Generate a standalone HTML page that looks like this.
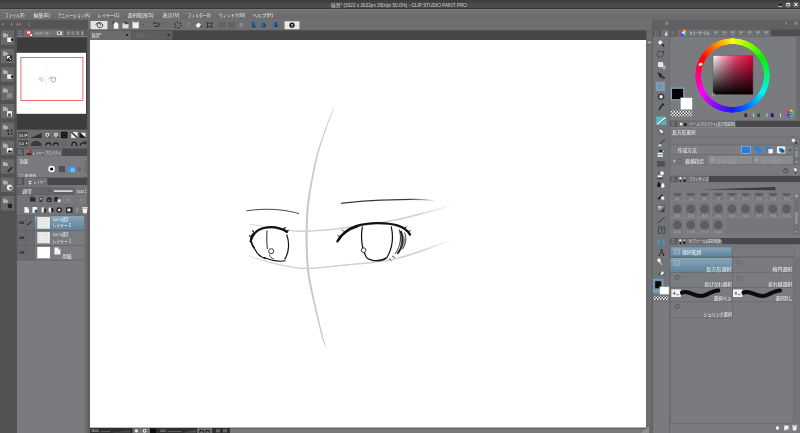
<!DOCTYPE html>
<html lang="ja">
<head>
<meta charset="utf-8">
<title>CLIP STUDIO PAINT PRO</title>
<style>
html,body{margin:0;padding:0;}
body{width:800px;height:433px;overflow:hidden;background:#555557;position:relative;}
svg{position:absolute;left:0;top:0;will-change:transform;}
svg text{font-family:"Liberation Sans","Noto Sans CJK JP",sans-serif;}
#wheel{position:absolute;left:695.4px;top:38px;width:74.8px;height:74.8px;border-radius:50%;
 background:conic-gradient(from 0deg,hsl(60,100%,50%),hsl(90,100%,50%),hsl(120,100%,48%),hsl(150,100%,48%),hsl(180,100%,48%),hsl(210,100%,50%),hsl(240,100%,55%),hsl(270,100%,52%),hsl(300,100%,50%),hsl(330,100%,50%),hsl(360,100%,50%),hsl(390,100%,50%),hsl(420,100%,50%));
 -webkit-mask:radial-gradient(circle closest-side,transparent 0,transparent 83%,#000 84.5%,#000 98.5%,transparent 100%);
 mask:radial-gradient(circle closest-side,transparent 0,transparent 83%,#000 84.5%,#000 98.5%,transparent 100%);}
</style>
</head>
<body>
<svg id="ui" width="800" height="433" viewBox="0 0 800 433">
<defs><linearGradient id="gt" x1="0" y1="0" x2="0" y2="1"><stop offset="0" stop-color="#3a3a3a"/><stop offset="0.6" stop-color="#4d4d4d"/><stop offset="1" stop-color="#454545"/></linearGradient><linearGradient id="gm" x1="0" y1="0" x2="0" y2="1"><stop offset="0" stop-color="#747476"/><stop offset="1" stop-color="#69696b"/></linearGradient><linearGradient id="gsel" x1="0" y1="0" x2="0" y2="1"><stop offset="0" stop-color="#86a6ba"/><stop offset="1" stop-color="#5f8399"/></linearGradient><linearGradient id="gsq" x1="0" y1="0" x2="1" y2="0"><stop offset="0" stop-color="#fff"/><stop offset="0.25" stop-color="#f4a4b8"/><stop offset="0.55" stop-color="#ea4470"/><stop offset="1" stop-color="#e2003a"/></linearGradient><linearGradient id="gsq2" x1="0" y1="0" x2="0" y2="1"><stop offset="0" stop-color="#000" stop-opacity="0"/><stop offset="1" stop-color="#000"/></linearGradient><linearGradient id="ggr" x1="0" y1="0" x2="1" y2="1"><stop offset="0" stop-color="#fff"/><stop offset="1" stop-color="#111"/></linearGradient><pattern id="chk" width="3.3" height="3.3" patternTransform="scale(0.825)" patternUnits="userSpaceOnUse"><rect width="4" height="4" fill="#fff"/><rect width="2" height="2" fill="#d4d4d4"/><rect x="2" y="2" width="2" height="2" fill="#d4d4d4"/></pattern><pattern id="chk2" width="3" height="3" patternUnits="userSpaceOnUse"><rect width="3" height="3" fill="#fff"/><rect width="1.5" height="1.5" fill="#444"/><rect x="1.5" y="1.5" width="1.5" height="1.5" fill="#444"/></pattern><linearGradient id="fg" gradientUnits="userSpaceOnUse" x1="418" y1="0" x2="453" y2="0"><stop offset="0" stop-color="#cfcfcf"/><stop offset="1" stop-color="#cfcfcf" stop-opacity="0"/></linearGradient><linearGradient id="fb" gradientUnits="userSpaceOnUse" x1="408" y1="0" x2="436" y2="0"><stop offset="0" stop-color="#3a3a3a"/><stop offset="1" stop-color="#3a3a3a" stop-opacity="0"/></linearGradient></defs>
<rect x="0" y="0" width="800" height="9" fill="url(#gt)" />
<rect x="0" y="8.5" width="800" height="0.8" fill="#2a2a2a" />
<text x="331" y="6.8" font-size="4.6" fill="#c8c8c8" text-anchor="start"  textLength="136" lengthAdjust="spacingAndGlyphs">練習* (3022 x 2622px 350dpi 50.0%) - CLIP STUDIO PAINT PRO</text>
<circle cx="780.3" cy="4.7" r="2.7" fill="#2a2a2a" stroke="#777" stroke-width="0.6"/>
<rect x="778.6" y="5.9" width="3.4" height="0.9" fill="#d0d0d0" />
<circle cx="788.1" cy="4.7" r="2.7" fill="#2a2a2a" stroke="#888" stroke-width="0.6"/>
<rect x="786.4" y="3" width="3.4" height="3.4" fill="#f0f0f0" />
<rect x="787.4" y="4.2" width="1.4" height="1.4" fill="#222" />
<circle cx="795.9" cy="4.7" r="2.7" fill="#2a2a2a" stroke="#888" stroke-width="0.6"/>
<path d="M794.4 3.2 L797.4 6.2 M797.4 3.2 L794.4 6.2" stroke="#fff" fill="none" stroke-width="1.1" />
<rect x="0" y="9.3" width="800" height="10.5" fill="url(#gm)" />
<rect x="0" y="9.2" width="800" height="0.7" fill="#858587" />
<text x="5" y="16.6" font-size="4.7" fill="#ececec" text-anchor="start"  textLength="19.5" lengthAdjust="spacingAndGlyphs">ファイル(F)</text>
<text x="33.5" y="16.6" font-size="4.7" fill="#ececec" text-anchor="start"  textLength="16.5" lengthAdjust="spacingAndGlyphs">編集(E)</text>
<text x="57.5" y="16.6" font-size="4.7" fill="#ececec" text-anchor="start"  textLength="32.5" lengthAdjust="spacingAndGlyphs">アニメーション(A)</text>
<text x="97.5" y="16.6" font-size="4.7" fill="#ececec" text-anchor="start"  textLength="22.0" lengthAdjust="spacingAndGlyphs">レイヤー(L)</text>
<text x="127.5" y="16.6" font-size="4.7" fill="#ececec" text-anchor="start"  textLength="26.2" lengthAdjust="spacingAndGlyphs">選択範囲(S)</text>
<text x="162.5" y="16.6" font-size="4.7" fill="#ececec" text-anchor="start"  textLength="17.0" lengthAdjust="spacingAndGlyphs">表示(V)</text>
<text x="187.5" y="16.6" font-size="4.7" fill="#ececec" text-anchor="start"  textLength="23.0" lengthAdjust="spacingAndGlyphs">フィルター(I)</text>
<text x="218.7" y="16.6" font-size="4.7" fill="#ececec" text-anchor="start"  textLength="26.3" lengthAdjust="spacingAndGlyphs">ウィンドウ(W)</text>
<text x="252.5" y="16.6" font-size="4.7" fill="#ececec" text-anchor="start"  textLength="20.5" lengthAdjust="spacingAndGlyphs">ヘルプ(H)</text>
<rect x="0" y="19.8" width="800" height="10.8" fill="#6f6f71" />
<rect x="0" y="19.5" width="800" height="0.6" fill="#7a7a7c" />
<rect x="0" y="19.8" width="88" height="9.5" fill="#555557" />
<path d="M1.5 24.3 l2 -1.8 v3.6z" stroke="none" fill="#8a8a8a" stroke-width="1" />
<path d="M13 24.3 l-2 -1.8 v3.6z" stroke="none" fill="#8a8a8a" stroke-width="1" />
<path d="M16 24.3 l2 -1.8 v3.6z M18.5 24.3 l2 -1.8 v3.6z" stroke="none" fill="#8a8a8a" stroke-width="1" />
<path d="M30 22.3 l-1.6 2 l1.6 2" stroke="#8a8a8a" fill="none" stroke-width="0.8" />
<rect x="652" y="19.8" width="148" height="9.5" fill="#606062" />
<path d="M665.5 21.3 v4 M666.3 21.3 l2.2 2 l-2.2 2z" stroke="#8c8c8c" fill="#8c8c8c" stroke-width="0.5" />
<path d="M785.4 21.3 l2.2 2 l-2.2 2z" stroke="none" fill="#8c8c8c" stroke-width="1" />
<path d="M794.6 21.3 v4 M795.4 21.3 l2.2 2 l-2.2 2z" stroke="#8c8c8c" fill="#8c8c8c" stroke-width="0.5" />
<rect x="90.5" y="21" width="17" height="8.2" rx="1" fill="#e4e4e4"/>
<path d="M100 25.6 a1.6 1.3 0 1 0 -2.6 -1 a2.8 2.3 0 1 0 4.8 -0.6 a3.4 2.6 0 0 0 -6.4 0.8" stroke="#222" fill="none" stroke-width="0.8" />
<path d="M113.8 22.2 h3 l1.6 1.6 v5 h-4.6z" stroke="none" fill="#f4f4f4" stroke-width="1" />
<rect x="112.6" y="21.6" width="1.8" height="1.8" fill="#2e2e2e" />
<rect x="122.5" y="24" width="6" height="4.3" fill="#e0e0e0" />
<rect x="124" y="22" width="3.6" height="2.2" fill="#444" />
<rect x="122.5" y="23.2" width="2.5" height="1" fill="#ccc" />
<rect x="132.5" y="21.5" width="6.2" height="6.8" fill="#f0f0f0" />
<rect x="133.6" y="21.5" width="4" height="0.9" fill="#555" />
<path d="M141.8 24.5 h2.2 l-1.1 1.4z" stroke="none" fill="#444" stroke-width="1" />
<path d="M153.5 23 h4 a1.6 1.6 0 0 1 0 3.4 h-3.4" stroke="#3a3a3a" fill="none" stroke-width="1.2" />
<path d="M154.6 21.6 l-2 1.5 l2 1.5z" stroke="none" fill="#3a3a3a" stroke-width="1" />
<path d="M167 23 h-3.5 a1.6 1.6 0 0 0 0 3.4 h3" stroke="#646466" fill="none" stroke-width="1.1" />
<circle cx="177.9" cy="25.1" r="3" fill="none" stroke="#2e2e2e" stroke-width="1.4" stroke-dasharray="1.5 1.64"/>
<rect x="186" y="22.2" width="5" height="5.6" fill="#77777a" />
<path d="M195.5 25.5 l3 -3 l2.6 2.6 l-3 3z" stroke="none" fill="#f4f4f4" stroke-width="1" />
<path d="M201.2 25 q1.2 1.8 0 2.6 q-1.2 -0.8 0 -2.6" stroke="none" fill="#222" stroke-width="1" />
<path d="M205.8 22 l1.8 1.2 M213 22 l-1.8 1.2 M205.8 28 l1.8 -1.2 M213 28 l-1.8 -1.2" stroke="#2c2c2c" fill="none" stroke-width="0.9" />
<rect x="207.4" y="23.2" width="4" height="3.6" fill="none" stroke="#2c2c2c" stroke-width="0.8"/>
<rect x="219" y="22.3" width="6.5" height="5.4" fill="#646466" />
<rect x="228.2" y="22.3" width="6.8" height="5.4" fill="#626264" />
<rect x="239.5" y="23" width="3.4" height="4" fill="#8a8a8c" />
<rect x="251" y="22.2" width="5.6" height="5.6" fill="#3f6f9f" />
<rect x="260.5" y="22.2" width="5.6" height="5.6" fill="#3f6f9f" />
<rect x="273" y="22.2" width="5.6" height="5.6" fill="#3f6f9f" />
<path d="M253 21.8 v4 l1.4 -1 M252 26.8 h4" stroke="#1c2c44" fill="none" stroke-width="0.8" />
<path d="M262 26.5 h3.6 M262.6 24 h2.4 v2.5" stroke="#1c2c44" fill="none" stroke-width="0.8" />
<path d="M275.8 21.8 v4.6 M274.4 25 l1.4 1.6 l1.4 -1.6" stroke="#16264a" fill="none" stroke-width="0.9" />
<rect x="284.5" y="21.2" width="15" height="8" rx="1" fill="#e6e6e6"/>
<circle cx="292" cy="25.2" r="2.6" fill="#1a1a1a" />
<text x="292" y="26.8" font-size="4.2" fill="#fff" text-anchor="middle" font-weight="bold">?</text>
<rect x="88" y="30.4" width="565" height="9.8" fill="#474747" />
<rect x="646.4" y="30.4" width="6.2" height="9.8" fill="#6c6c6e" />
<rect x="90" y="30.6" width="41.5" height="9.4" fill="#6c6c6e" />
<text x="91.8" y="36.6" font-size="4.6" fill="#e2e2e2" text-anchor="start"  textLength="9.4" lengthAdjust="spacingAndGlyphs">練習*</text>
<rect x="126.2" y="34" width="1.8" height="1.8" fill="#1e1e1e" />
<rect x="132" y="30.9" width="40.5" height="8.9" fill="#5e5e60" />
<text x="135.5" y="36.6" font-size="4.4" fill="#8e8e90" text-anchor="start"  textLength="9.6" lengthAdjust="spacingAndGlyphs">イラスト</text>
<rect x="167.6" y="34" width="1.8" height="1.8" fill="#222" />
<rect x="88" y="40" width="565" height="393" fill="#68686a" />
<rect x="88" y="30.4" width="2" height="403" fill="#5e5e60" />
<rect x="90" y="40" width="556.2" height="387.8" fill="#ffffff" />
<rect x="646.2" y="40" width="6.2" height="388" fill="#67676a" />
<rect x="646.8" y="40.6" width="5" height="3.6" fill="#7d7d80" />
<rect x="647.9" y="42.2" width="2.8" height="0.7" fill="#ddd" />
<rect x="647.2" y="46" width="4.4" height="378" fill="#707073" />
<rect x="90" y="427.8" width="140" height="5.2" fill="#2e2e2e" />
<rect x="230" y="427.8" width="416" height="5.2" fill="#77787a" />
<rect x="230" y="427.8" width="416" height="0.7" fill="#4a4a4a" />
<text x="91.5" y="432.4" font-size="3.6" fill="#e0e0e0" text-anchor="start" >50.0</text>
<path d="M100.5 431.6 h10" stroke="#8a8a8a" fill="none" stroke-width="0.5" />
<path d="M111 432.6 h19 v-2.4z" stroke="none" fill="#4a4a4a" stroke-width="1" />
<rect x="132.6" y="428.2" width="17.4" height="4.8" fill="#707073" />
<circle cx="136.4" cy="430.8" r="1.6" fill="#e8e8e8" />
<circle cx="144.6" cy="430.8" r="1.9" fill="#e8e8e8" />
<circle cx="144.6" cy="430.8" r="0.8" fill="#333" />
<rect x="150" y="428.5" width="6" height="4.5" fill="#0c0c0c" />
<text x="160.5" y="432.4" font-size="3.6" fill="#d8d8d8" text-anchor="start" >0.0</text>
<path d="M167.5 431.6 h14" stroke="#8a8a8a" fill="none" stroke-width="0.5" />
<path d="M183 432.8 h13 v-3.4z" stroke="none" fill="#4c4c4c" stroke-width="1" />
<rect x="197" y="428.2" width="15.2" height="4.8" fill="#707073" />
<path d="M199.6 432.4 a2 2.2 0 1 1 4 0 M205.6 432.4 a2 2.2 0 1 1 4 0" stroke="#1e1e1e" fill="none" stroke-width="1.1" />
<rect x="216" y="429.2" width="4" height="3.2" fill="#666" />
<rect x="223" y="429.2" width="4" height="3.2" fill="#666" />
<path d="M641 433 l8 -7 v7z" stroke="none" fill="#8e8e90" stroke-width="1" />
<path d="M333.8 106.9 L333.3 108.0 L332.7 109.4 L332.1 111.1 L331.4 112.9 L330.6 114.9 L329.7 117.1 L328.8 119.3 L327.9 121.6 L327.1 123.9 L326.2 126.3 L325.3 128.6 L324.5 130.8 L323.8 133.0 L323.0 135.2 L322.2 137.5 L321.4 139.7 L320.6 142.0 L319.8 144.3 L319.0 146.7 L318.2 149.1 L317.5 151.7 L316.7 154.3 L316.0 157.0 L315.3 159.8 L314.6 162.8 L313.8 166.0 L313.1 169.4 L312.4 172.9 L311.7 176.5 L311.0 180.1 L310.3 183.7 L309.7 187.2 L309.1 190.6 L308.5 193.9 L308.0 197.0 L307.6 199.9 L307.3 202.5 L307.0 204.9 L306.7 207.2 L306.5 209.4 L306.3 211.4 L306.2 213.4 L306.1 215.3 L306.0 217.2 L306.0 219.1 L305.9 221.0 L305.8 222.9 L305.8 225.0 L305.7 227.0 L305.6 229.1 L305.6 231.2 L305.5 233.2 L305.5 235.3 L305.5 237.4 L305.5 239.4 L305.5 241.5 L305.6 243.6 L305.6 245.7 L305.7 247.9 L305.8 250.0 L305.8 252.2 L305.9 254.4 L306.0 256.5 L306.2 258.7 L306.3 260.9 L306.4 263.1 L306.6 265.3 L306.8 267.6 L307.1 269.9 L307.3 272.3 L307.6 274.7 L308.0 277.2 L308.4 279.7 L308.9 282.4 L309.5 285.1 L310.0 287.9 L310.7 290.7 L311.3 293.6 L312.0 296.4 L312.6 299.3 L313.3 302.1 L313.9 304.9 L314.6 307.6 L315.2 310.2 L315.8 312.8 L316.4 315.5 L317.1 318.2 L317.7 320.9 L318.4 323.6 L319.0 326.2 L319.7 328.7 L320.3 331.2 L320.9 333.4 L321.4 335.6 L321.9 337.5 L322.4 339.2 L322.9 340.6 L323.3 341.9 L323.7 342.9 L324.0 343.8 L324.4 344.6 L324.7 345.2 L325.0 345.8 L325.3 346.2 L325.5 346.6 L325.7 347.0 L325.9 347.3 L326.1 347.6 L326.5 347.4 L326.4 347.0 L326.3 346.7 L326.1 346.3 L325.9 345.9 L325.7 345.4 L325.5 344.9 L325.2 344.2 L324.9 343.5 L324.6 342.6 L324.3 341.5 L324.0 340.3 L323.6 338.8 L323.1 337.2 L322.7 335.2 L322.2 333.1 L321.6 330.8 L321.0 328.4 L320.4 325.9 L319.8 323.2 L319.2 320.5 L318.6 317.8 L318.0 315.1 L317.4 312.4 L316.8 309.8 L316.2 307.2 L315.6 304.5 L315.0 301.7 L314.4 298.9 L313.7 296.0 L313.1 293.2 L312.5 290.3 L311.9 287.5 L311.4 284.7 L310.8 282.0 L310.4 279.4 L310.0 276.8 L309.6 274.4 L309.3 272.0 L309.1 269.7 L308.8 267.4 L308.6 265.1 L308.5 262.9 L308.3 260.7 L308.2 258.6 L308.1 256.4 L308.0 254.3 L307.9 252.1 L307.8 250.0 L307.8 247.8 L307.7 245.7 L307.7 243.6 L307.6 241.5 L307.6 239.4 L307.6 237.4 L307.6 235.3 L307.6 233.3 L307.7 231.2 L307.7 229.2 L307.8 227.1 L307.8 225.0 L307.9 223.0 L308.0 221.0 L308.0 219.1 L308.1 217.3 L308.2 215.4 L308.3 213.5 L308.4 211.6 L308.5 209.5 L308.7 207.4 L309.0 205.1 L309.2 202.7 L309.6 200.1 L310.0 197.3 L310.4 194.2 L310.9 190.9 L311.5 187.5 L312.1 184.0 L312.7 180.4 L313.4 176.8 L314.0 173.2 L314.7 169.7 L315.4 166.4 L316.1 163.2 L316.7 160.2 L317.4 157.4 L318.1 154.7 L318.8 152.0 L319.5 149.5 L320.3 147.1 L321.0 144.7 L321.7 142.4 L322.5 140.1 L323.2 137.8 L324.0 135.6 L324.7 133.4 L325.5 131.2 L326.2 128.9 L327.0 126.6 L327.9 124.2 L328.7 121.9 L329.6 119.6 L330.4 117.3 L331.2 115.2 L332.0 113.2 L332.7 111.3 L333.3 109.7 L333.8 108.2 L334.2 107.1z" fill="#c8c8c8"/>
<path d="M249.0 224.2 L250.0 224.4 L251.2 224.7 L252.7 225.0 L254.4 225.3 L256.2 225.7 L258.2 226.0 L260.2 226.4 L262.2 226.8 L264.2 227.1 L266.2 227.5 L268.1 227.8 L269.9 228.1 L271.6 228.4 L273.4 228.7 L275.1 229.0 L276.8 229.2 L278.6 229.5 L280.3 229.8 L282.0 230.0 L283.7 230.3 L285.3 230.5 L286.9 230.7 L288.4 230.9 L289.9 231.0 L291.3 231.2 L292.5 231.3 L293.6 231.5 L294.6 231.6 L295.5 231.7 L296.5 231.8 L297.5 231.9 L298.7 231.9 L300.0 232.0 L301.4 232.0 L303.1 232.0 L305.0 231.9 L307.2 231.8 L309.5 231.7 L311.9 231.6 L314.5 231.5 L317.2 231.3 L320.0 231.1 L323.0 230.9 L326.2 230.7 L329.4 230.4 L332.9 230.0 L336.4 229.6 L340.1 229.2 L344.0 228.7 L348.2 228.1 L352.7 227.5 L357.4 226.9 L362.2 226.2 L367.0 225.5 L372.0 224.7 L376.9 224.0 L381.7 223.2 L386.4 222.4 L390.9 221.5 L395.1 220.7 L399.3 219.9 L403.5 219.0 L407.7 218.0 L411.8 217.0 L415.8 216.0 L419.8 215.0 L423.6 214.0 L427.2 213.1 L430.6 212.1 L433.7 211.3 L436.6 210.5 L439.2 209.8 L441.5 209.1 L443.5 208.5 L445.2 207.9 L446.7 207.4 L447.9 206.9 L449.0 206.5 L449.9 206.1 L450.8 205.7 L451.5 205.4 L452.1 205.1 L452.6 204.8 L453.2 204.6 L452.8 203.4 L452.2 203.7 L451.6 203.9 L450.9 204.2 L450.2 204.5 L449.4 204.8 L448.5 205.2 L447.4 205.6 L446.2 206.0 L444.7 206.5 L443.0 207.0 L441.0 207.6 L438.8 208.2 L436.2 208.9 L433.3 209.8 L430.2 210.6 L426.8 211.6 L423.2 212.5 L419.4 213.5 L415.4 214.5 L411.4 215.6 L407.3 216.5 L403.2 217.5 L399.0 218.4 L394.9 219.3 L390.6 220.1 L386.1 220.9 L381.4 221.7 L376.6 222.5 L371.7 223.3 L366.8 224.1 L362.0 224.8 L357.2 225.5 L352.5 226.1 L348.0 226.7 L343.8 227.3 L339.9 227.8 L336.2 228.2 L332.7 228.6 L329.3 229.0 L326.1 229.3 L322.9 229.5 L320.0 229.7 L317.1 229.9 L314.4 230.1 L311.8 230.2 L309.4 230.3 L307.1 230.4 L305.0 230.5 L303.0 230.6 L301.4 230.6 L300.0 230.6 L298.7 230.6 L297.6 230.5 L296.6 230.5 L295.7 230.4 L294.7 230.3 L293.7 230.2 L292.6 230.0 L291.4 229.9 L290.1 229.8 L288.6 229.6 L287.0 229.4 L285.5 229.2 L283.8 229.0 L282.2 228.8 L280.5 228.6 L278.7 228.3 L277.0 228.1 L275.3 227.8 L273.5 227.6 L271.8 227.3 L270.1 227.1 L268.3 226.8 L266.4 226.5 L264.4 226.2 L262.4 225.9 L260.3 225.6 L258.3 225.2 L256.4 224.9 L254.5 224.6 L252.9 224.3 L251.3 224.1 L250.1 223.9 L249.0 223.8z" fill="url(#fg)"/>
<path d="M248.9 256.2 L249.9 256.6 L251.2 257.0 L252.7 257.5 L254.4 258.1 L256.2 258.7 L258.1 259.3 L260.1 260.0 L262.2 260.6 L264.2 261.3 L266.2 261.9 L268.1 262.4 L269.9 262.9 L271.6 263.4 L273.3 263.8 L275.0 264.2 L276.8 264.6 L278.5 265.0 L280.2 265.4 L281.9 265.7 L283.5 266.1 L285.2 266.4 L286.8 266.7 L288.4 267.0 L289.9 267.2 L291.3 267.5 L292.6 267.7 L293.7 268.0 L294.8 268.2 L295.9 268.4 L297.0 268.6 L298.2 268.8 L299.4 268.9 L300.8 269.0 L302.3 269.1 L304.0 269.1 L306.0 269.1 L308.2 269.0 L310.4 268.9 L312.8 268.8 L315.3 268.7 L317.9 268.5 L320.6 268.2 L323.5 268.0 L326.5 267.7 L329.7 267.4 L333.0 267.0 L336.4 266.7 L340.1 266.3 L343.9 265.9 L348.1 265.5 L352.5 265.1 L357.2 264.7 L361.9 264.2 L366.8 263.7 L371.7 263.2 L376.6 262.6 L381.4 261.9 L386.2 261.2 L390.8 260.4 L395.2 259.5 L399.5 258.5 L403.9 257.4 L408.4 256.1 L412.8 254.7 L417.2 253.2 L421.5 251.8 L425.6 250.3 L429.5 248.9 L433.1 247.5 L436.5 246.3 L439.5 245.3 L442.1 244.4 L444.2 243.6 L446.0 243.0 L447.4 242.4 L448.6 242.0 L449.4 241.6 L450.1 241.3 L450.6 241.0 L451.0 240.8 L451.3 240.6 L451.6 240.5 L451.9 240.3 L452.2 240.2 L451.8 239.0 L451.4 239.2 L451.0 239.3 L450.7 239.5 L450.4 239.6 L450.0 239.8 L449.5 240.0 L448.9 240.3 L448.0 240.6 L446.9 241.0 L445.5 241.5 L443.7 242.1 L441.5 242.8 L438.9 243.8 L435.9 244.8 L432.6 246.1 L428.9 247.4 L425.0 248.8 L420.9 250.3 L416.7 251.8 L412.3 253.2 L407.9 254.6 L403.5 255.9 L399.1 257.1 L394.8 258.1 L390.5 258.9 L385.9 259.7 L381.2 260.5 L376.4 261.1 L371.5 261.7 L366.6 262.3 L361.8 262.8 L357.0 263.2 L352.4 263.7 L348.0 264.1 L343.8 264.5 L339.9 264.9 L336.3 265.3 L332.8 265.7 L329.5 266.0 L326.4 266.3 L323.4 266.6 L320.5 266.8 L317.8 267.1 L315.2 267.3 L312.7 267.4 L310.3 267.5 L308.1 267.6 L306.0 267.7 L304.1 267.7 L302.4 267.7 L300.9 267.6 L299.5 267.5 L298.3 267.4 L297.2 267.3 L296.2 267.1 L295.1 266.9 L294.0 266.7 L292.8 266.4 L291.5 266.2 L290.1 266.0 L288.6 265.7 L287.0 265.4 L285.4 265.2 L283.8 264.9 L282.1 264.5 L280.4 264.2 L278.7 263.8 L277.0 263.5 L275.3 263.1 L273.6 262.7 L271.8 262.3 L270.1 261.9 L268.4 261.4 L266.5 260.9 L264.5 260.3 L262.4 259.8 L260.4 259.2 L258.4 258.6 L256.4 258.0 L254.6 257.4 L252.9 256.9 L251.4 256.4 L250.1 256.1 L249.1 255.8z" fill="url(#fg)"/>
<path d="M246.5 210.8 C258 209 272 208.6 284 210.4 C290 211.4 295 212.4 299 213.6" stroke="#4a4a4a" fill="none" stroke-width="1.0" />
<path d="M341 203.4 C360 200.8 390 199.6 412 199.4 C422 199.4 430 200 436 200.8" stroke="url(#fb)" fill="none" stroke-width="1.2" />
<path d="M250.5 241.5 C252.5 234 257 229.6 264 228 C272 226.2 280 227.4 287 232" stroke="#111" fill="none" stroke-width="2.1" stroke-linecap="round"/>
<path d="M252.8 233.5 C250.4 238 250.8 243.4 254.5 248.5" stroke="#111" fill="none" stroke-width="1.4" />
<path d="M252.4 234.5 C250 239 250.6 244 254.5 248.5 M251 237 l-2 -1.6 M254 232.6 l-1.6 -2.2 M283 229 l3 -1.6 M286 231.4 l2.6 -0.8" stroke="#111" fill="none" stroke-width="1.1" />
<path d="M267 230.5 C266.6 237 266.8 244 267.4 249" stroke="#111" fill="none" stroke-width="0.9" />
<path d="M286.6 234.6 C289.6 242 289.4 252 284.6 259.4" stroke="#111" fill="none" stroke-width="1.2" />
<path d="M264 257.6 C271 260.6 279 261.8 285.6 260.8" stroke="#111" fill="none" stroke-width="1.1" />
<path d="M254.5 248.5 C257 254 261 257.6 266 258.6" stroke="#111" fill="none" stroke-width="1.2" />
<circle cx="271.2" cy="251.2" r="2.5" fill="#fff" stroke="#111" stroke-width="0.8"/>
<path d="M269.4 254.4 C270 257 271.6 258.6 274 259" stroke="#111" fill="none" stroke-width="0.8" />
<path d="M337.4 241.4 C341 234.6 347 229.4 356 226.2 C368 222.4 386 222 398 225.6 C404 227.6 408 231 410 234.6" stroke="#111" fill="none" stroke-width="2.3" stroke-linecap="round"/>
<path d="M340 236.6 l-2.4 -1 M344 231.6 l-2 -2 M404 228.4 l2.8 -1.8 M408 231.6 l2.8 -1" stroke="#111" fill="none" stroke-width="0.9" />
<path d="M339.4 239.6 C343 233.6 349 229.6 358 226.8" stroke="#111" fill="none" stroke-width="1.2" stroke-linecap="round"/>
<path d="M362.4 226.6 C360.8 236 361 247 366.4 257.4" stroke="#111" fill="none" stroke-width="1.2" />
<path d="M391.2 226.4 C393.4 236 392.6 248 386.8 257.6" stroke="#111" fill="none" stroke-width="1.2" />
<path d="M366.4 257.4 C372 261.8 381 261.8 386.8 257.6" stroke="#111" fill="none" stroke-width="1.3" />
<path d="M400.6 231 C404 238 403 247 397.4 253.8" stroke="#111" fill="none" stroke-width="1.8" />
<path d="M401 232 C407 237 406 245 400 251z" stroke="none" fill="#444" stroke-width="1" opacity="0.55"/>
<path d="M404.6 232.6 C406.8 238 406 244 402.6 249 M399 229.4 C401.6 236 401 246 395 254" stroke="#111" fill="none" stroke-width="0.8" />
<circle cx="363.6" cy="250.2" r="2.3" fill="#fff" stroke="#111" stroke-width="0.8"/>
<path d="M392 256 l3 1.6 M389 258.6 l2.4 2" stroke="#111" fill="none" stroke-width="0.7" />
<rect x="0" y="29.3" width="16" height="403.7" fill="#525254" />
<rect x="1" y="30.4" width="13.2" height="14.4" fill="#6a6a6c" />
<path d="M3 33.2 h2.4 l0.8 0.9 h1.6 v3.2 h-4.8z" stroke="none" fill="#bdbdbd" stroke-width="1" opacity="0.85"/>
<rect x="7.2" y="37.6" width="4.6" height="4.4" fill="#f2f2f2" />
<circle cx="12" cy="39.8" r="1.2" fill="#111" />
<rect x="1" y="48.8" width="13.2" height="14.4" fill="#6a6a6c" />
<path d="M3 51.6 h2.4 l0.8 0.9 h1.6 v3.2 h-4.8z" stroke="none" fill="#bdbdbd" stroke-width="1" opacity="0.85"/>
<rect x="6.6" y="55.4" width="5.6" height="5.6" fill="#2a2a2a" />
<path d="M7.6 56.4 l3.6 3.6 M7.6 56.4 h2.4 M7.6 56.4 v2.4" stroke="#fff" fill="none" stroke-width="1" />
<rect x="1" y="67.19999999999999" width="13.2" height="14.4" fill="#6a6a6c" />
<path d="M3 69.99999999999999 h2.4 l0.8 0.9 h1.6 v3.2 h-4.8z" stroke="none" fill="#bdbdbd" stroke-width="1" opacity="0.85"/>
<rect x="7.2" y="74.39999999999998" width="4.6" height="4.4" fill="#f2f2f2" />
<circle cx="12" cy="76.59999999999998" r="1.2" fill="#111" />
<rect x="1" y="85.6" width="13.2" height="14.4" fill="#6a6a6c" />
<path d="M3 88.39999999999999 h2.4 l0.8 0.9 h1.6 v3.2 h-4.8z" stroke="none" fill="#bdbdbd" stroke-width="1" opacity="0.85"/>
<rect x="7" y="93.19999999999999" width="5" height="4.6" fill="#8a8a8c" />
<rect x="1" y="104.0" width="13.2" height="14.4" fill="#6a6a6c" />
<path d="M3 106.8 h2.4 l0.8 0.9 h1.6 v3.2 h-4.8z" stroke="none" fill="#bdbdbd" stroke-width="1" opacity="0.85"/>
<rect x="7" y="111.0" width="5" height="5.4" fill="#e8e8e8" />
<rect x="8" y="113.6" width="3" height="2.8" fill="#555" />
<rect x="1" y="122.4" width="13.2" height="14.4" fill="#6a6a6c" />
<path d="M3 125.2 h2.4 l0.8 0.9 h1.6 v3.2 h-4.8z" stroke="none" fill="#bdbdbd" stroke-width="1" opacity="0.85"/>
<circle cx="8" cy="131.0" r="0.9" fill="#222" />
<circle cx="11.6" cy="130.4" r="0.9" fill="#222" />
<circle cx="8.6" cy="134.0" r="0.9" fill="#222" />
<circle cx="12" cy="133.6" r="0.9" fill="#222" />
<rect x="1" y="140.79999999999998" width="13.2" height="14.4" fill="#6a6a6c" />
<path d="M3 143.59999999999997 h2.4 l0.8 0.9 h1.6 v3.2 h-4.8z" stroke="none" fill="#bdbdbd" stroke-width="1" opacity="0.85"/>
<rect x="6.8" y="147.99999999999997" width="5.6" height="4.8" fill="#f0f0f0" />
<path d="M7.4 152.39999999999998 l2 -2.8 l1.4 1.6 l0.8 -0.8 l1 2z" stroke="none" fill="#222" stroke-width="1" />
<rect x="1" y="159.2" width="13.2" height="14.4" fill="#6a6a6c" />
<path d="M3 161.99999999999997 h2.4 l0.8 0.9 h1.6 v3.2 h-4.8z" stroke="none" fill="#bdbdbd" stroke-width="1" opacity="0.85"/>
<path d="M7 171.2 l4.6 -4.6 l1.2 1.2 l-4.6 4.6z" stroke="none" fill="#2a2a2a" stroke-width="1" />
<rect x="1" y="177.6" width="13.2" height="14.4" fill="#6a6a6c" />
<path d="M3 180.39999999999998 h2.4 l0.8 0.9 h1.6 v3.2 h-4.8z" stroke="none" fill="#bdbdbd" stroke-width="1" opacity="0.85"/>
<circle cx="9.6" cy="187.39999999999998" r="2.8" fill="#e6e6e6" />
<circle cx="10.6" cy="188.0" r="1.2" fill="#555" />
<rect x="1" y="196.0" width="13.2" height="14.4" fill="#6a6a6c" />
<path d="M3 198.79999999999998 h2.4 l0.8 0.9 h1.6 v3.2 h-4.8z" stroke="none" fill="#bdbdbd" stroke-width="1" opacity="0.85"/>
<circle cx="10" cy="206.0" r="2.4" fill="#222" />
<rect x="16" y="29.3" width="72" height="403.7" fill="#7a7b7f" />
<rect x="16" y="29.3" width="0.8" height="403.7" fill="#4e4e50" />
<rect x="87.2" y="29.3" width="0.8" height="403.7" fill="#5a5a5c" />
<rect x="16.8" y="28.8" width="70.4" height="7.9" fill="#5e5e60" />
<rect x="16.8" y="36.4" width="70.4" height="0.8" fill="#8c8c8e" />
<rect x="18.4" y="31.2" width="0.9" height="0.9" fill="#9a9a9c" />
<rect x="18.4" y="33" width="0.9" height="0.9" fill="#9a9a9c" />
<rect x="18.4" y="34.8" width="0.9" height="0.9" fill="#9a9a9c" />
<rect x="20.2" y="31.2" width="0.9" height="0.9" fill="#9a9a9c" />
<rect x="20.2" y="33" width="0.9" height="0.9" fill="#9a9a9c" />
<rect x="20.2" y="34.8" width="0.9" height="0.9" fill="#9a9a9c" />
<rect x="24" y="29.8" width="40" height="6.8" fill="#707073" />
<rect x="26" y="30.4" width="5.4" height="4.8" rx="0.8" fill="#d03a3a"/>
<rect x="27" y="31.4" width="3.2" height="2.2" fill="#f4f4f4" />
<rect x="30.2" y="34.2" width="1.8" height="1.8" fill="#fff" />
<text x="34.6" y="35.1" font-size="3.9" fill="#e0e0e0" text-anchor="start"  textLength="16" lengthAdjust="spacingAndGlyphs">ナビゲーター</text>
<rect x="56.8" y="31.4" width="5.4" height="3.6" fill="#cfcfd1" />
<rect x="58" y="32.2" width="2" height="1.6" fill="#555" />
<rect x="66.6" y="31.2" width="3.2" height="3.8" fill="#8a8a8c" />
<rect x="71.2" y="31.2" width="3.2" height="3.8" fill="#88888a" />
<rect x="76" y="31.2" width="3.4" height="3.8" fill="#86868a" />
<rect x="81.6" y="31" width="1.6" height="4.4" fill="#a8a8aa" />
<rect x="16.8" y="37.2" width="70.4" height="92.6" fill="#3c3c3c" />
<rect x="16.6" y="52.8" width="69.4" height="61" fill="#ffffff" />
<rect x="20.9" y="57.6" width="62" height="42.8" fill="none" stroke="#e64848" stroke-width="0.8"/>
<path d="M46.6 64 C45.2 73 44.8 83 46.4 92" stroke="#ececec" fill="none" stroke-width="0.5" />
<path d="M36 79.6 C44 81 56 80 63 78.6" stroke="#f2f2f2" fill="none" stroke-width="0.4" />
<path d="M38.4 78.8 q1.6 -1.8 4 -0.8 M40.2 78.4 v2.6 M42.4 78.6 q0.6 1.8 -0.6 3.2" stroke="#909090" fill="none" stroke-width="0.55" />
<path d="M48.6 78.6 q3.4 -2.6 7.4 -0.4 M51.4 77.8 q-0.6 2.2 0.6 3.8 q1.6 1 3 -0.2 q1 -1.6 0.2 -3.6" stroke="#7c7c7c" fill="none" stroke-width="0.6" />
<rect x="16.8" y="129.8" width="70.4" height="18.6" fill="#6c6c6f" />
<rect x="18.4" y="132" width="9.4" height="6.2" fill="#4c4c4e" />
<text x="19" y="137" font-size="3.6" fill="#f0f0f0" text-anchor="start" >33.9</text>
<path d="M26 133.8 l1.6 1.3 l-1.6 1.3z" stroke="none" fill="#e0e0e0" stroke-width="1" />
<rect x="18.4" y="140.2" width="9.4" height="6.2" fill="#4c4c4e" />
<text x="19" y="145.2" font-size="3.6" fill="#f0f0f0" text-anchor="start" >0.0</text>
<path d="M26 142.0 l1.6 1.3 l-1.6 1.3z" stroke="none" fill="#e0e0e0" stroke-width="1" />
<path d="M30.6 138 h11 v-5z" stroke="none" fill="#2e2e30" stroke-width="1" />
<path d="M30.6 146 h11 q0 -5 -5.5 -5 q-5.5 0 -5.5 5z" stroke="none" fill="#3a3a3c" stroke-width="1" />
<circle cx="47.4" cy="134.8" r="2" fill="#e4e4e4" />
<rect x="46.4" y="134.5" width="2" height="0.7" fill="#333" />
<rect x="47.05" y="133.8" width="0.7" height="2" fill="#333" />
<path d="M48.8 136.4 l1.6 1.6" stroke="#222" fill="none" stroke-width="0.9" />
<circle cx="56" cy="134.8" r="2" fill="#e4e4e4" />
<rect x="55" y="134.5" width="2" height="0.7" fill="#333" />
<path d="M57.4 136.4 l1.6 1.6" stroke="#222" fill="none" stroke-width="0.9" />
<rect x="61" y="131.8" width="6.4" height="6.4" fill="#111" />
<rect x="62.6" y="133.4" width="3.2" height="3.2" fill="none" stroke="#666" stroke-width="0.6" stroke-dasharray="0.8 0.6"/>
<rect x="71.2" y="132" width="6.4" height="6" fill="#e8e8e8" />
<path d="M71.4 132.2 l6 5.6" stroke="#222" fill="none" stroke-width="1.2" />
<rect x="79.6" y="132" width="6.4" height="6" fill="#1e1e1e" />
<path d="M80 132.4 h5.6 v5.2z" stroke="none" fill="#f0f0f0" stroke-width="1" />
<path d="M46 145.6 a2.5 2.7 0 1 1 5 0" stroke="#1c1c1c" fill="none" stroke-width="1.3" />
<path d="M53.4 145.6 a2.5 2.7 0 1 1 5 0" stroke="#1c1c1c" fill="none" stroke-width="1.3" />
<circle cx="64.2" cy="143.4" r="2.3" fill="none" stroke="#5c5c5e" stroke-width="0.8"/>
<path d="M72 146 a2.4 2.8 0 1 1 4.6 -1 l0.4 1.4" stroke="#1e1e1e" fill="none" stroke-width="1.3" />
<path d="M80.4 146 a2.4 2.4 0 0 1 4.4 -1.8 M83 142 h2.6 v2.6" stroke="#1e1e1e" fill="none" stroke-width="1.1" />
<rect x="16.8" y="148.4" width="70.4" height="7.6" fill="#4a4a4c" />
<rect x="16.8" y="148.4" width="6.6" height="7.6" fill="#5c5c5e" />
<rect x="18.4" y="150" width="0.9" height="0.9" fill="#a0a0a2" />
<rect x="18.4" y="151.7" width="0.9" height="0.9" fill="#a0a0a2" />
<rect x="18.4" y="153.4" width="0.9" height="0.9" fill="#a0a0a2" />
<rect x="20.2" y="150" width="0.9" height="0.9" fill="#a0a0a2" />
<rect x="20.2" y="151.7" width="0.9" height="0.9" fill="#a0a0a2" />
<rect x="20.2" y="153.4" width="0.9" height="0.9" fill="#a0a0a2" />
<rect x="24" y="148.8" width="38" height="7.2" fill="#6f7073" />
<path d="M26.6 154.6 l4.2 -5 l0.8 0 l0 5z" stroke="none" fill="#c03030" stroke-width="1" />
<rect x="26.6" y="153.6" width="5" height="1.4" fill="#2a2a2a" />
<text x="32.2" y="154.8" font-size="4.1" fill="#e6e6e6" text-anchor="start"  textLength="28.8" lengthAdjust="spacingAndGlyphs">レイヤープロパティ</text>
<rect x="16.8" y="156" width="70.4" height="21.6" fill="#7a7b7f" />
<text x="19.4" y="163.2" font-size="4.9" fill="#f4f4f4" text-anchor="start"  textLength="8.6" lengthAdjust="spacingAndGlyphs">効果</text>
<circle cx="51.6" cy="169" r="3.3" fill="#f6f6f6" />
<circle cx="51.6" cy="169" r="1.6" fill="#0a0a0a" />
<rect x="58.8" y="166" width="6.2" height="6.2" fill="#4e4f52" />
<rect x="68.4" y="166" width="6.4" height="6.2" fill="#2f9df0" />
<rect x="70.6" y="168.2" width="4.2" height="4" fill="#6cc0ff" />
<rect x="77.6" y="167" width="3.6" height="4.4" fill="#5e6e74" />
<rect x="84" y="157" width="3.2" height="20" fill="#707174" />
<path d="M84.6 159.6 l1 -1.2 l1 1.2z M84.6 174.4 l1 1.2 l1 -1.2z" stroke="none" fill="#c8c8c8" stroke-width="1" />
<clipPath id="cpl"><rect x="17" y="173.6" width="66" height="3.6"/></clipPath>
<text x="19.4" y="178.2" font-size="4" fill="#e4e4e4" text-anchor="start" clip-path="url(#cpl)">▽ 表現色</text>
<rect x="16.8" y="177.6" width="70.4" height="7.6" fill="#474749" />
<rect x="16.8" y="177.6" width="6.6" height="7.6" fill="#5c5c5e" />
<rect x="18.4" y="179.2" width="0.9" height="0.9" fill="#a0a0a2" />
<rect x="18.4" y="180.89999999999998" width="0.9" height="0.9" fill="#a0a0a2" />
<rect x="18.4" y="182.6" width="0.9" height="0.9" fill="#a0a0a2" />
<rect x="20.2" y="179.2" width="0.9" height="0.9" fill="#a0a0a2" />
<rect x="20.2" y="180.89999999999998" width="0.9" height="0.9" fill="#a0a0a2" />
<rect x="20.2" y="182.6" width="0.9" height="0.9" fill="#a0a0a2" />
<rect x="24" y="178" width="23.4" height="7.2" fill="#6f7073" />
<path d="M27.8 183.6 l2.2 -1.2 l2.2 1.2 l-2.2 1.2z M27.8 181.8 l2.2 -1.2 l2.2 1.2 l-2.2 1.2z" stroke="#444" fill="#e6e6e6" stroke-width="0.3" />
<text x="33.4" y="184" font-size="4.1" fill="#e8e8e8" text-anchor="start"  textLength="12.6" lengthAdjust="spacingAndGlyphs">レイヤー</text>
<rect x="16.8" y="185.2" width="70.4" height="30" fill="#737477" />
<rect x="17.4" y="187.8" width="34.6" height="7" fill="#66676a" stroke="#58585a" stroke-width="0.5"/>
<rect x="53.4" y="187.8" width="21" height="7" fill="#5e5f62" />
<text x="22" y="193.4" font-size="4.9" fill="#f4f4f4" text-anchor="start"  textLength="10" lengthAdjust="spacingAndGlyphs">通常</text>
<path d="M48.6 190.4 h2.2 l-1.1 1.6z" stroke="none" fill="#333" stroke-width="1" />
<rect x="54" y="190.2" width="18.6" height="1.8" fill="#d8d8da" />
<rect x="54" y="189.6" width="18.6" height="0.6" fill="#9a9a9c" />
<text x="76.8" y="193.2" font-size="4.4" fill="#f6f6f6" text-anchor="start"  textLength="7" lengthAdjust="spacingAndGlyphs">100</text>
<path d="M84.8 190.4 l0.9 -1.2 l0.9 1.2z M84.8 192 l0.9 1.2 l0.9 -1.2z" stroke="none" fill="#ddd" stroke-width="1" />
<rect x="30" y="197.4" width="5.6" height="4.2" fill="#2e2e30" />
<rect x="31" y="196.6" width="2.2" height="1" fill="#2e2e30" />
<rect x="39.4" y="197" width="2.8" height="5" fill="#3a3a3c" />
<rect x="40" y="198" width="1.6" height="1.4" fill="#ddd" />
<path d="M46.8 202 v-2.6 a2.4 2.4 0 0 1 4.8 0 v2.6z" stroke="none" fill="#2c2c2e" stroke-width="1" />
<rect x="48.4" y="199.6" width="1.6" height="1.4" fill="#888" />
<rect x="54.2" y="197" width="4" height="4.6" fill="#2c2c2e" />
<rect x="57.6" y="199.4" width="3" height="2.8" fill="#e8e8e8" />
<rect x="63.6" y="196.8" width="10.4" height="5.6" fill="none" stroke="#8c8d90" stroke-width="0.5"/>
<rect x="66" y="198.2" width="5" height="2.8" fill="#86878a" />
<rect x="78.4" y="196.8" width="6" height="5.6" fill="none" stroke="#8c8d90" stroke-width="0.5"/>
<rect x="80" y="198.2" width="3" height="2.8" fill="#86878a" />
<rect x="24.4" y="207" width="4.6" height="5.8" fill="#f2f2f2" />
<rect x="27.4" y="207" width="1.6" height="1.6" fill="#888" />
<rect x="32.4" y="207" width="4.8" height="5.8" fill="#f2f2f2" />
<rect x="34.8" y="209.8" width="2.6" height="3" fill="#444" />
<rect x="41.6" y="207.4" width="2.6" height="5" fill="#eee" />
<rect x="43.8" y="208.6" width="2.4" height="4" fill="#333" />
<circle cx="51.2" cy="210" r="2.7" fill="#eee" />
<path d="M51.2 207.3 a2.7 2.7 0 0 1 0 5.4z" stroke="none" fill="#222" stroke-width="1" />
<circle cx="59.2" cy="210" r="2.8" fill="#2a2a2a" />
<circle cx="59.2" cy="210" r="1.3" fill="#e6e6e6" />
<rect x="66" y="207.2" width="6.6" height="5.6" fill="#2a2a2a" />
<rect x="67.4" y="208.6" width="3" height="2.8" fill="#f0f0f0" />
<rect x="76" y="207.6" width="2.4" height="4.8" fill="#909194" />
<path d="M82.4 208.4 h5 l-0.6 4.8 h-3.8z" stroke="none" fill="#f0f0f0" stroke-width="1" />
<rect x="82" y="207.2" width="5.8" height="1" fill="#f0f0f0" />
<rect x="17.2" y="215.4" width="67.0" height="44.6" fill="#7b7c80" />
<rect x="17.2" y="215.4" width="17.2" height="44.6" fill="#6b6c6f" />
<rect x="34.4" y="215.6" width="49.800000000000004" height="14.6" fill="url(#gsel)" />
<rect x="17.2" y="215.4" width="67.0" height="0.6" fill="#5c5d60" />
<rect x="17.2" y="230.2" width="67.0" height="0.6" fill="#5c5d60" />
<rect x="17.2" y="245" width="67.0" height="0.6" fill="#5c5d60" />
<rect x="17.2" y="259.8" width="67.0" height="0.6" fill="#5c5d60" />
<rect x="17.2" y="215.4" width="0.6" height="44.6" fill="#5e5f62" />
<rect x="25.6" y="215.4" width="0.6" height="44.6" fill="#5e5f62" />
<rect x="34.2" y="215.4" width="0.6" height="44.6" fill="#5e5f62" />
<rect x="84.2" y="215.4" width="3" height="217.6" fill="#6e6f72" />
<rect x="37" y="216.8" width="13.2" height="12.2" fill="url(#chk)" stroke="#555" stroke-width="0.4"/>
<rect x="37" y="231.6" width="13.2" height="12.2" fill="url(#chk)" stroke="#555" stroke-width="0.4"/>
<rect x="37" y="246.6" width="13.2" height="12" fill="#ffffff" stroke="#555" stroke-width="0.4"/>
<text x="52.8" y="220.8" font-size="4.3" fill="#f6f6f6" text-anchor="start"  textLength="15.8" lengthAdjust="spacingAndGlyphs">100 %通常</text>
<text x="52.8" y="227.3" font-size="4.5" fill="#f6f6f6" text-anchor="start"  textLength="18.2" lengthAdjust="spacingAndGlyphs">レイヤー 2</text>
<text x="52.8" y="236.2" font-size="4.3" fill="#f0f0f0" text-anchor="start"  textLength="15.8" lengthAdjust="spacingAndGlyphs">100 %通常</text>
<text x="52.8" y="242.7" font-size="4.5" fill="#f0f0f0" text-anchor="start"  textLength="18.2" lengthAdjust="spacingAndGlyphs">レイヤー 1</text>
<path d="M54.4 247.4 h4 l2 2 v5 h-6z" stroke="none" fill="#f4f4f4" stroke-width="1" />
<path d="M58.4 247.4 v2 h2z" stroke="none" fill="#777" stroke-width="1" />
<text x="62.3" y="257.9" font-size="4.6" fill="#f2f2f2" text-anchor="start"  textLength="9.6" lengthAdjust="spacingAndGlyphs">用紙</text>
<ellipse cx="21.6" cy="222.6" rx="2.3" ry="1.5" fill="#262626"/>
<circle cx="21.2" cy="222.29999999999998" r="0.6" fill="#ddd" />
<ellipse cx="21.6" cy="237.4" rx="2.3" ry="1.5" fill="#262626"/>
<circle cx="21.2" cy="237.1" r="0.6" fill="#ddd" />
<ellipse cx="21.6" cy="252.2" rx="2.3" ry="1.5" fill="#262626"/>
<circle cx="21.2" cy="251.89999999999998" r="0.6" fill="#ddd" />
<path d="M27.4 224.4 l3.6 -3.6 l0.9 0.9 l-3.6 3.6z" stroke="none" fill="#3a3a3c" stroke-width="1" />
<path d="M27 225 l0.4 -1.2 l0.8 0.8z" stroke="none" fill="#222" stroke-width="1" />
<rect x="652.4" y="29.3" width="147.6" height="403.7" fill="#7a7b7f" />
<rect x="652.4" y="29.3" width="0.7" height="403.7" fill="#58585a" />
<rect x="669.4" y="29.3" width="0.7" height="403.7" fill="#606164" />
<rect x="653.1" y="36.3" width="16.3" height="266" fill="#737477" />
<rect x="653" y="29.3" width="16.4" height="7" fill="#5a5a5c" />
<rect x="655" y="30.8" width="0.9" height="0.9" fill="#a0a0a2" />
<rect x="655" y="32.5" width="0.9" height="0.9" fill="#a0a0a2" />
<rect x="655" y="34.2" width="0.9" height="0.9" fill="#a0a0a2" />
<rect x="656.8" y="30.8" width="0.9" height="0.9" fill="#a0a0a2" />
<rect x="656.8" y="32.5" width="0.9" height="0.9" fill="#a0a0a2" />
<rect x="656.8" y="34.2" width="0.9" height="0.9" fill="#a0a0a2" />
<rect x="661" y="29.8" width="8" height="6.6" fill="#6f7073" />
<path d="M664.6 35.4 l1.6 -4.4 l1.6 4.4z" stroke="none" fill="#e0e0e0" stroke-width="1" />
<circle cx="660.3" cy="42.4" r="2.3" fill="#f6f6f6" stroke="#4a4a4c" stroke-width="0.5"/>
<path d="M661.9 44 l2.3 2.5" stroke="#1c1c1c" fill="none" stroke-width="1.3" />
<circle cx="660.1" cy="54.2" r="3.1" fill="none" stroke="#454547" stroke-width="0.8"/>
<path d="M662.6 50.6 l2 0.8 l-1.2 1.6z" stroke="none" fill="#2a2a2c" stroke-width="1" />
<path d="M658 62.6 q2.6 -1.4 5 0 l0.4 3.4 q-2.4 2.2 -5.4 0.6z" stroke="none" fill="#f4f4f4" stroke-width="1" />
<path d="M659.4 63.4 v2.6 M661 63 v3" stroke="#bbb" fill="none" stroke-width="0.5" />
<circle cx="664" cy="67.4" r="1.3" fill="#8a8b8e" stroke="#f0f0f0" stroke-width="0.6"/>
<path d="M657.4 72.2 l5 2.4 l-1 0.8 l3.8 2.2 l-0.8 1.2 l-3.6 -2.2 l-0.6 1.6z" stroke="none" fill="#262628" stroke-width="1" />
<path d="M660 76.6 l3 3" stroke="#333" fill="none" stroke-width="0.9" />
<rect x="656" y="82" width="8.8" height="8.8" fill="#6f93aa" stroke="#86a8bc" stroke-width="0.5"/>
<rect x="657.6" y="83.8" width="5.6" height="5.4" fill="#5d839b" stroke="#9dbccc" stroke-width="0.6"/>
<path d="M659.5 83.8 v5.4 M661.4 83.8 v5.4 M657.6 85.6 h5.6 M657.6 87.4 h5.6" stroke="#8cb0c2" fill="none" stroke-width="0.4" />
<circle cx="661.1" cy="96.8" r="3" fill="#3c3c3e" />
<path d="M661.1 93 v7.6 M657.3 96.8 h7.6 M658.4 94.1 l5.4 5.4 M663.8 94.1 l-5.4 5.4" stroke="#2e2e30" fill="none" stroke-width="0.6" />
<circle cx="661.1" cy="96.8" r="1.7" fill="#fafafa" />
<path d="M663.6 104 l-0.9 -0.9 l-3.6 5 l-0.6 2.6 l2 -1.6z" stroke="none" fill="#252527" stroke-width="1" />
<path d="M662.4 103.6 l1.6 1.6" stroke="#1a1a1a" fill="none" stroke-width="1.3" />
<rect x="656.2" y="116.6" width="10" height="8.2" fill="#5cb8ba" />
<path d="M665.2 117.8 l-6.6 5.4 l-1.4 0.4" stroke="#f8f8f8" fill="none" stroke-width="1.1" />
<path d="M665.6 119 l-6 5" stroke="#2c5a5c" fill="none" stroke-width="0.6" />
<path d="M659 129.2 q2.4 -0.6 4 2 q1.2 2 0.8 2.8 q-1.6 0.2 -3.4 -1.4 q-1.8 -1.6 -1.4 -3.4z" stroke="#2a2a2c" fill="#f6f6f6" stroke-width="0.5" />
<path d="M663 133.2 l1 1" stroke="#1c1c1c" fill="none" stroke-width="0.9" />
<path d="M665.2 139 l-5.4 5.2" stroke="#303032" fill="none" stroke-width="0.9" />
<path d="M658 145.8 q1 -2.2 3.6 -1.4 q-0.6 2.2 -3.6 1.4z" stroke="none" fill="#eef4fa" stroke-width="1" />
<path d="M658.4 146.6 h4" stroke="#7aa4c8" fill="none" stroke-width="0.5" />
<rect x="659.4" y="149.8" width="2.6" height="2.2" fill="#2a2a2c" />
<rect x="657.6" y="152.8" width="5.2" height="4" fill="#f4f4f4" />
<rect x="657.6" y="154.4" width="5.2" height="0.8" fill="#555" />
<rect x="663" y="150.8" width="1" height="1" fill="#ddd" />
<rect x="657" y="161.2" width="7.8" height="5.2" fill="#4a4a4c" />
<rect x="657" y="162.8" width="7.8" height="0.5" fill="#66676a" />
<rect x="657" y="164.4" width="7.8" height="0.5" fill="#5e5f62" />
<circle cx="662" cy="173.2" r="1.9" fill="#f2f2f2" />
<rect x="657.6" y="175.4" width="4.6" height="2.2" fill="#f4f4f4" />
<rect x="657.4" y="177.6" width="5.4" height="1.2" fill="#2e2e30" />
<path d="M658 173.6 l2 -1.6" stroke="#333" fill="none" stroke-width="0.8" />
<path d="M658.8 181.4 q2.6 3 1.8 5 q-1.8 1.6 -3.4 0 q-0.8 -2 1.6 -5z" stroke="none" fill="#1c1c1e" stroke-width="1" />
<path d="M662.8 182.6 q2.4 2.6 1.6 4.4 q-1.6 1.4 -3.2 0 q-0.6 -1.8 1.6 -4.4z" stroke="none" fill="#f6f6f6" stroke-width="1" />
<path d="M657.4 198.8 l4.4 -4.4 l1.4 1.2 l-4.4 4.4z" stroke="none" fill="#2a2a2c" stroke-width="1" />
<path d="M661.4 196.4 q2.8 -0.4 3.2 2 q-0.6 1.8 -2.8 1.2 q-1.4 -1.2 -0.4 -3.2z" stroke="none" fill="#f4f4f4" stroke-width="1" />
<rect x="658" y="205.8" width="6.2" height="5.8" fill="url(#ggr)" stroke="#3a3a3c" stroke-width="0.4"/>
<path d="M664.7 217 l-7.1 6.2" stroke="#2a2a2c" fill="none" stroke-width="0.9" />
<rect x="658.6" y="226.8" width="6.2" height="6.4" fill="none" stroke="#3e3e40" stroke-width="0.8"/>
<path d="M660.2 228.8 h3.2 M661.8 228.8 v3" stroke="#3e3e40" fill="none" stroke-width="0.8" />
<path d="M659.4 245 q-2.4 -3 0.4 -5.4 M662.6 245 q2.6 -3 -0.2 -5.4" stroke="#3aa4e0" fill="none" stroke-width="1.1" />
<path d="M660.4 239.8 l1.2 5" stroke="#2a7fb8" fill="none" stroke-width="0.7" />
<text x="661.4" y="255.6" font-size="9.6" fill="#261e2c" text-anchor="middle" style="font-family:'Liberation Serif',serif">A</text>
<path d="M657.6 258.6 q2 -0.8 3 0.4 q0.6 1.2 0 2.4 l2.6 5.4 l-3.6 -4.4 q-1.6 0 -2.2 -1.2 q-0.6 -1.4 0.2 -2.6z" stroke="#6a6a6c" fill="#f6f6f6" stroke-width="0.3" />
<path d="M659.4 274.6 l1.8 -3 q1.6 -1.2 2.8 0.4 q0.6 1.6 -0.8 2.6 l-2.4 0.6z" stroke="#2e2e30" fill="#f4f4f4" stroke-width="0.5" />
<path d="M658.8 275.4 l1.6 -3" stroke="#222" fill="none" stroke-width="0.9" />
<path d="M658 277.4 h5.4" stroke="#6a9cc4" fill="none" stroke-width="0.6" stroke-dasharray="1 0.8"/>
<rect x="652.9" y="279" width="10.6" height="14.2" fill="#7b9db3" />
<rect x="655" y="281" width="6.3" height="7.4" fill="#050505" stroke="#4e6e84" stroke-width="0.6"/>
<rect x="659.8" y="286.8" width="9.2" height="7.6" fill="#fdfdfd" stroke="#9a9a9c" stroke-width="0.4"/>
<rect x="653.4" y="296.4" width="14.8" height="3.6" fill="url(#chk2)" />
<rect x="670.1" y="29.3" width="129.9" height="7" fill="#4e4e50" />
<rect x="670.1" y="29.3" width="99.6" height="7" fill="#646466" />
<rect x="670.1" y="29.3" width="6.4" height="7" fill="#5c5c5e" />
<rect x="671.6" y="30.6" width="0.9" height="0.9" fill="#a0a0a2" />
<rect x="671.6" y="32.300000000000004" width="0.9" height="0.9" fill="#a0a0a2" />
<rect x="671.6" y="34.0" width="0.9" height="0.9" fill="#a0a0a2" />
<rect x="673.4" y="30.6" width="0.9" height="0.9" fill="#a0a0a2" />
<rect x="673.4" y="32.300000000000004" width="0.9" height="0.9" fill="#a0a0a2" />
<rect x="673.4" y="34.0" width="0.9" height="0.9" fill="#a0a0a2" />
<rect x="677" y="29.6" width="44" height="6.7" fill="#6f7073" />
<g transform="translate(683.4,32.8)"><path d="M0 0 L0 -3.2 A3.2 3.2 0 0 1 2.77 -1.6z" fill="#ffd800"/><path d="M0 0 L2.77 -1.6 A3.2 3.2 0 0 1 2.77 1.6z" fill="#30d030"/><path d="M0 0 L2.77 1.6 A3.2 3.2 0 0 1 0 3.2z" fill="#20b0ff"/><path d="M0 0 L0 3.2 A3.2 3.2 0 0 1 -2.77 1.6z" fill="#3838ff"/><path d="M0 0 L-2.77 1.6 A3.2 3.2 0 0 1 -2.77 -1.6z" fill="#e020e0"/><path d="M0 0 L-2.77 -1.6 A3.2 3.2 0 0 1 0 -3.2z" fill="#ff3020"/><circle r="1.3" fill="#f4f4f4"/></g>
<text x="689.5" y="35" font-size="4" fill="#e8e8e8" text-anchor="start"  textLength="20.2" lengthAdjust="spacingAndGlyphs">カラーサークル</text>
<rect x="712.6" y="30.2" width="7.6" height="5.8" fill="#6f7073" />
<rect x="714.0" y="31.4" width="3.6" height="1.4" fill="#a4a5a8" />
<rect x="714.0" y="33.6" width="2.4" height="1" fill="#909194" />
<rect x="721.2" y="30.2" width="7.6" height="5.8" fill="#6f7073" />
<rect x="722.6" y="31.4" width="3.6" height="1.4" fill="#a4a5a8" />
<rect x="722.6" y="33.6" width="2.4" height="1" fill="#909194" />
<rect x="729.6" y="30.2" width="7.6" height="5.8" fill="#6f7073" />
<rect x="731.0" y="31.4" width="3.6" height="1.4" fill="#a4a5a8" />
<rect x="731.0" y="33.6" width="2.4" height="1" fill="#909194" />
<rect x="738" y="30.2" width="7.6" height="5.8" fill="#6f7073" />
<rect x="739.4" y="31.4" width="3.6" height="1.4" fill="#a4a5a8" />
<rect x="739.4" y="33.6" width="2.4" height="1" fill="#909194" />
<rect x="746.4" y="30.2" width="7.6" height="5.8" fill="#6f7073" />
<rect x="747.8" y="31.4" width="3.6" height="1.4" fill="#a4a5a8" />
<rect x="747.8" y="33.6" width="2.4" height="1" fill="#909194" />
<rect x="754.8" y="30.2" width="7.6" height="5.8" fill="#6f7073" />
<rect x="756.1999999999999" y="31.4" width="3.6" height="1.4" fill="#a4a5a8" />
<rect x="756.1999999999999" y="33.6" width="2.4" height="1" fill="#909194" />
<rect x="763.2" y="30.2" width="7.6" height="5.8" fill="#6f7073" />
<rect x="764.6" y="31.4" width="3.6" height="1.4" fill="#a4a5a8" />
<rect x="764.6" y="33.6" width="2.4" height="1" fill="#909194" />
<rect x="713" y="55.4" width="40" height="39.2" fill="url(#gsq)" />
<rect x="713" y="55.4" width="40" height="39.2" fill="url(#gsq2)" />
<rect x="713" y="55.4" width="40" height="39.2" fill="none" stroke="#55565a" stroke-width="0.5"/>
<circle cx="713.4" cy="94.2" r="1.2" fill="none" stroke="#ddd" stroke-width="0.5"/>
<rect x="671.4" y="88.2" width="12.4" height="11.6" fill="#030303" stroke="#7fa3ba" stroke-width="1.3"/>
<rect x="680.6" y="97.8" width="11.6" height="11.8" fill="#ffffff" stroke="#9c9da0" stroke-width="0.4"/>
<rect x="670.6" y="110.6" width="21.6" height="5.8" fill="url(#chk2)" />
<rect x="744.4" y="113.4" width="2.7" height="3.6" fill="#5e1212" />
<rect x="753.2" y="113.4" width="0.9" height="3.6" fill="#d8d8d8" />
<rect x="757.2" y="113.4" width="2.8" height="3.6" fill="#1e5c22" />
<rect x="766.5" y="113.4" width="0.9" height="3.6" fill="#d8d8d8" />
<rect x="770.8" y="113.4" width="2.8" height="3.6" fill="#14148a" />
<rect x="780" y="113.4" width="0.9" height="3.6" fill="#d8d8d8" />
<g transform="translate(789.6,113.4)"><path d="M0 -3.3 A3.3 3.3 0 0 1 2.86 -1.65" stroke="#f0e020" stroke-width="1.5" fill="none"/><path d="M2.86 -1.65 A3.3 3.3 0 0 1 2.86 1.65" stroke="#30d830" stroke-width="1.5" fill="none"/><path d="M2.86 1.65 A3.3 3.3 0 0 1 0 3.3" stroke="#20c0f0" stroke-width="1.5" fill="none"/><path d="M0 3.3 A3.3 3.3 0 0 1 -2.86 1.65" stroke="#3040ff" stroke-width="1.5" fill="none"/><path d="M-2.86 1.65 A3.3 3.3 0 0 1 -2.86 -1.65" stroke="#e030e0" stroke-width="1.5" fill="none"/><path d="M-2.86 -1.65 A3.3 3.3 0 0 1 0 -3.3" stroke="#ff3030" stroke-width="1.5" fill="none"/><circle r="1.5" fill="#2a2a2c"/><circle r="0.8" cx="0.4" fill="#e8e8e8"/></g>
<rect x="796" y="36.4" width="4" height="84.4" fill="#6c6d70" />
<rect x="670.1" y="120.8" width="129.9" height="6.2" fill="#48484a" />
<rect x="670.1" y="120.8" width="6.4" height="6.2" fill="#5c5c5e" />
<rect x="671.6" y="121.6" width="0.9" height="0.9" fill="#a0a0a2" />
<rect x="671.6" y="123.3" width="0.9" height="0.9" fill="#a0a0a2" />
<rect x="671.6" y="125.0" width="0.9" height="0.9" fill="#a0a0a2" />
<rect x="673.4" y="121.6" width="0.9" height="0.9" fill="#a0a0a2" />
<rect x="673.4" y="123.3" width="0.9" height="0.9" fill="#a0a0a2" />
<rect x="673.4" y="125.0" width="0.9" height="0.9" fill="#a0a0a2" />
<rect x="677" y="121.1" width="58.6" height="5.9" fill="#6f7073" />
<rect x="670.1" y="127" width="129.9" height="0.7" fill="#88898c" />
<circle cx="681.2" cy="124" r="1.5" fill="#e8e8e8" />
<circle cx="685.2" cy="124.6" r="1.5" fill="#1a1a1a" />
<text x="689.4" y="126.1" font-size="4.1" fill="#e2e2e2" text-anchor="start"  textLength="45.6" lengthAdjust="spacingAndGlyphs">ツールプロパティ[長方形選択]</text>
<text x="672" y="134.4" font-size="5" fill="#f6f6f6" text-anchor="start"  textLength="23.7" lengthAdjust="spacingAndGlyphs">長方形選択</text>
<rect x="670.6" y="136.8" width="128.6" height="8" fill="#77787c" stroke="#68696c" stroke-width="0.5"/>
<circle cx="793.4" cy="140.4" r="2.4" fill="#e4e4e6" stroke="#3a3a3c" stroke-width="0.6"/>
<path d="M795.2 142.2 l2 2" stroke="#2a2a2c" fill="none" stroke-width="1.1" />
<rect x="670.6" y="145.6" width="123" height="8.4" fill="#7d7e82" stroke="#6a6b6e" stroke-width="0.4"/>
<text x="677.8" y="152" font-size="4.9" fill="#f6f6f6" text-anchor="start"  textLength="19.1" lengthAdjust="spacingAndGlyphs">作成方法</text>
<rect x="741.2" y="146.2" width="9.4" height="7.2" fill="#2a7cd8" stroke="#9cc4f0" stroke-width="0.6"/>
<rect x="755" y="146.6" width="4.4" height="4.4" fill="#2f7fe0" />
<rect x="757.6" y="149" width="4.4" height="4.4" fill="#2f7fe0" />
<rect x="765.8" y="146.6" width="4.4" height="4.4" fill="#2f7fe0" />
<rect x="768.4" y="149" width="4.4" height="4.4" fill="#f4f4f4" />
<rect x="777" y="146.4" width="8.2" height="7" fill="#f0f0f0" />
<rect x="779" y="148" width="3.8" height="3.4" fill="#2f7fe0" />
<rect x="780.6" y="149.6" width="3.8" height="3" fill="#1a4a90" />
<path d="M789 149.4 h2.4 l-1.2 1.8z" stroke="none" fill="#2e2e30" stroke-width="1" />
<rect x="670.6" y="154.4" width="123" height="10.4" fill="#77787c" stroke="#6a6b6e" stroke-width="0.4"/>
<path d="M673.2 161 h2.4 M674.4 159.8 v2.4" stroke="#e4e4e4" fill="none" stroke-width="0.6" />
<rect x="678" y="159.2" width="3.6" height="3.6" fill="#808185" stroke="#5a5a5c" stroke-width="0.5"/>
<text x="685.3" y="163.2" font-size="4.9" fill="#f6f6f6" text-anchor="start"  textLength="19.1" lengthAdjust="spacingAndGlyphs">縦横指定</text>
<rect x="709" y="156.4" width="42.6" height="7" fill="#8b8c90" stroke="#9a9b9e" stroke-width="0.4"/>
<text x="716" y="162.6" font-size="4.6" fill="#9c9da0" text-anchor="start"  textLength="21.8" lengthAdjust="spacingAndGlyphs">比率指定</text>
<rect x="711" y="158.4" width="2.6" height="2.8" fill="#9fa0a4" />
<rect x="753.6" y="156.4" width="38.6" height="7" fill="#8b8c90" stroke="#9a9b9e" stroke-width="0.4"/>
<text x="761.4" y="162.6" font-size="4.6" fill="#9c9da0" text-anchor="start"  textLength="19.6" lengthAdjust="spacingAndGlyphs">長さ指定</text>
<rect x="755.4" y="158.4" width="2.6" height="2.8" fill="#9fa0a4" />
<rect x="793.8" y="145.6" width="5.6" height="19.2" fill="#6f7073" />
<path d="M795.4 148.6 l1.2 -1.4 l1.2 1.4z M795.4 161.6 l1.2 1.4 l1.2 -1.4z" stroke="none" fill="#ccc" stroke-width="1" />
<rect x="795" y="151" width="3.2" height="6" fill="#8e8f92" />
<circle cx="785.8" cy="170.8" r="2.2" fill="none" stroke="#4a4a4c" stroke-width="0.9"/>
<path d="M785.8 168 v2.2" stroke="#4a4a4c" fill="none" stroke-width="0.9" />
<path d="M793.6 168.6 a2 2 0 0 1 3.6 1.6 l-0.8 1.6 h-1.8 l-0.8 -1.6z" stroke="#444" fill="#e6e6e6" stroke-width="0.4" />
<rect x="794.6" y="172.2" width="1.8" height="1.2" fill="#333" />
<rect x="670.1" y="175.9" width="129.9" height="6.2" fill="#48484a" />
<rect x="670.1" y="175.9" width="6.4" height="6.2" fill="#5c5c5e" />
<rect x="671.6" y="176.7" width="0.9" height="0.9" fill="#a0a0a2" />
<rect x="671.6" y="178.39999999999998" width="0.9" height="0.9" fill="#a0a0a2" />
<rect x="671.6" y="180.1" width="0.9" height="0.9" fill="#a0a0a2" />
<rect x="673.4" y="176.7" width="0.9" height="0.9" fill="#a0a0a2" />
<rect x="673.4" y="178.39999999999998" width="0.9" height="0.9" fill="#a0a0a2" />
<rect x="673.4" y="180.1" width="0.9" height="0.9" fill="#a0a0a2" />
<rect x="677" y="176.2" width="32" height="5.9" fill="#6f7073" />
<circle cx="680.4" cy="178.3" r="1.2" fill="#e8e8e8" />
<circle cx="680.4" cy="180.9" r="0.8" fill="#1a1a1a" />
<circle cx="684.6" cy="177.9" r="0.7" fill="#e8e8e8" />
<circle cx="684.6" cy="180.7" r="1.2" fill="#1a1a1a" />
<text x="689" y="181.2" font-size="4.1" fill="#e2e2e2" text-anchor="start"  textLength="19.4" lengthAdjust="spacingAndGlyphs">ブラシサイズ</text>
<path d="M702 189.4 L775.4 187 V190.2 L702 189.6z" stroke="none" fill="#3c3c3e" stroke-width="1" />
<rect x="670.5" y="193" width="122.85000000000001" height="41.6" fill="#76777b" />
<clipPath id="cpg"><rect x="670" y="193" width="124" height="42"/></clipPath>
<g clip-path="url(#cpg)">
<rect x="670.8" y="185.10000000000002" width="13.05" height="15.6" fill="#77787c" stroke="#8b8c90" stroke-width="0.5"/>
<circle cx="677.325" cy="191.8" r="4.4" fill="#5d5e61" />
<text x="677.325" y="199.60000000000002" font-size="3.7" fill="#aaabae" text-anchor="middle" >40</text>
<rect x="684.4499999999999" y="185.10000000000002" width="13.05" height="15.6" fill="#77787c" stroke="#8b8c90" stroke-width="0.5"/>
<circle cx="690.975" cy="191.8" r="4.4" fill="#5d5e61" />
<text x="690.975" y="199.60000000000002" font-size="3.7" fill="#aaabae" text-anchor="middle" >50</text>
<rect x="698.0999999999999" y="185.10000000000002" width="13.05" height="15.6" fill="#77787c" stroke="#8b8c90" stroke-width="0.5"/>
<circle cx="704.625" cy="191.8" r="4.4" fill="#5d5e61" />
<text x="704.625" y="199.60000000000002" font-size="3.7" fill="#aaabae" text-anchor="middle" >60</text>
<rect x="711.75" y="185.10000000000002" width="13.05" height="15.6" fill="#77787c" stroke="#8b8c90" stroke-width="0.5"/>
<circle cx="718.2750000000001" cy="191.8" r="4.4" fill="#5d5e61" />
<text x="718.2750000000001" y="199.60000000000002" font-size="3.7" fill="#aaabae" text-anchor="middle" >70</text>
<rect x="725.4" y="185.10000000000002" width="13.05" height="15.6" fill="#77787c" stroke="#8b8c90" stroke-width="0.5"/>
<circle cx="731.9250000000001" cy="191.8" r="4.4" fill="#5d5e61" />
<text x="731.9250000000001" y="199.60000000000002" font-size="3.7" fill="#aaabae" text-anchor="middle" >80</text>
<rect x="739.05" y="185.10000000000002" width="13.05" height="15.6" fill="#77787c" stroke="#8b8c90" stroke-width="0.5"/>
<circle cx="745.575" cy="191.8" r="4.4" fill="#5d5e61" />
<text x="745.575" y="199.60000000000002" font-size="3.7" fill="#aaabae" text-anchor="middle" >100</text>
<rect x="752.6999999999999" y="185.10000000000002" width="13.05" height="15.6" fill="#77787c" stroke="#8b8c90" stroke-width="0.5"/>
<circle cx="759.225" cy="191.8" r="4.4" fill="#5d5e61" />
<text x="759.225" y="199.60000000000002" font-size="3.7" fill="#aaabae" text-anchor="middle" >120</text>
<rect x="766.3499999999999" y="185.10000000000002" width="13.05" height="15.6" fill="#77787c" stroke="#8b8c90" stroke-width="0.5"/>
<circle cx="772.875" cy="191.8" r="4.4" fill="#5d5e61" />
<text x="772.875" y="199.60000000000002" font-size="3.7" fill="#aaabae" text-anchor="middle" >150</text>
<rect x="780.0" y="185.10000000000002" width="13.05" height="15.6" fill="#77787c" stroke="#8b8c90" stroke-width="0.5"/>
<circle cx="786.5250000000001" cy="191.8" r="4.4" fill="#5d5e61" />
<text x="786.5250000000001" y="199.60000000000002" font-size="3.7" fill="#aaabae" text-anchor="middle" >170</text>
<rect x="670.8" y="202.10000000000002" width="13.05" height="15.6" fill="#77787c" stroke="#8b8c90" stroke-width="0.5"/>
<circle cx="677.325" cy="208.8" r="4.4" fill="#5d5e61" />
<text x="677.325" y="216.60000000000002" font-size="3.7" fill="#aaabae" text-anchor="middle" >200</text>
<rect x="684.4499999999999" y="202.10000000000002" width="13.05" height="15.6" fill="#77787c" stroke="#8b8c90" stroke-width="0.5"/>
<circle cx="690.975" cy="208.8" r="4.4" fill="#5d5e61" />
<text x="690.975" y="216.60000000000002" font-size="3.7" fill="#aaabae" text-anchor="middle" >250</text>
<rect x="698.0999999999999" y="202.10000000000002" width="13.05" height="15.6" fill="#77787c" stroke="#8b8c90" stroke-width="0.5"/>
<circle cx="704.625" cy="208.8" r="4.4" fill="#5d5e61" />
<text x="704.625" y="216.60000000000002" font-size="3.7" fill="#aaabae" text-anchor="middle" >300</text>
<rect x="711.75" y="202.10000000000002" width="13.05" height="15.6" fill="#77787c" stroke="#8b8c90" stroke-width="0.5"/>
<circle cx="718.2750000000001" cy="208.8" r="4.4" fill="#5d5e61" />
<text x="718.2750000000001" y="216.60000000000002" font-size="3.7" fill="#aaabae" text-anchor="middle" >400</text>
<rect x="725.4" y="202.10000000000002" width="13.05" height="15.6" fill="#77787c" stroke="#8b8c90" stroke-width="0.5"/>
<circle cx="731.9250000000001" cy="208.8" r="4.4" fill="#5d5e61" />
<text x="731.9250000000001" y="216.60000000000002" font-size="3.7" fill="#aaabae" text-anchor="middle" >500</text>
<rect x="739.05" y="202.10000000000002" width="13.05" height="15.6" fill="#77787c" stroke="#8b8c90" stroke-width="0.5"/>
<circle cx="745.575" cy="208.8" r="4.4" fill="#5d5e61" />
<text x="745.575" y="216.60000000000002" font-size="3.7" fill="#aaabae" text-anchor="middle" >600</text>
<rect x="752.6999999999999" y="202.10000000000002" width="13.05" height="15.6" fill="#77787c" stroke="#8b8c90" stroke-width="0.5"/>
<circle cx="759.225" cy="208.8" r="4.4" fill="#5d5e61" />
<text x="759.225" y="216.60000000000002" font-size="3.7" fill="#aaabae" text-anchor="middle" >700</text>
<rect x="766.3499999999999" y="202.10000000000002" width="13.05" height="15.6" fill="#77787c" stroke="#8b8c90" stroke-width="0.5"/>
<circle cx="772.875" cy="208.8" r="4.4" fill="#5d5e61" />
<text x="772.875" y="216.60000000000002" font-size="3.7" fill="#aaabae" text-anchor="middle" >800</text>
<rect x="780.0" y="202.10000000000002" width="13.05" height="15.6" fill="#77787c" stroke="#8b8c90" stroke-width="0.5"/>
<circle cx="786.5250000000001" cy="208.8" r="4.4" fill="#5d5e61" />
<text x="786.5250000000001" y="216.60000000000002" font-size="3.7" fill="#aaabae" text-anchor="middle" >1000</text>
<rect x="670.8" y="218.3" width="13.05" height="15.6" fill="#77787c" stroke="#8b8c90" stroke-width="0.5"/>
<circle cx="677.325" cy="225" r="4.4" fill="#5d5e61" />
<text x="677.325" y="232.8" font-size="3.7" fill="#aaabae" text-anchor="middle" >1200</text>
<rect x="684.4499999999999" y="218.3" width="13.05" height="15.6" fill="#77787c" stroke="#8b8c90" stroke-width="0.5"/>
<circle cx="690.975" cy="225" r="4.4" fill="#5d5e61" />
<text x="690.975" y="232.8" font-size="3.7" fill="#aaabae" text-anchor="middle" >1500</text>
<rect x="698.0999999999999" y="218.3" width="13.05" height="15.6" fill="#77787c" stroke="#8b8c90" stroke-width="0.5"/>
<circle cx="704.625" cy="225" r="4.4" fill="#5d5e61" />
<text x="704.625" y="232.8" font-size="3.7" fill="#aaabae" text-anchor="middle" >1700</text>
<rect x="711.75" y="218.3" width="13.05" height="15.6" fill="#77787c" stroke="#8b8c90" stroke-width="0.5"/>
<circle cx="718.2750000000001" cy="225" r="4.4" fill="#5d5e61" />
<text x="718.2750000000001" y="232.8" font-size="3.7" fill="#aaabae" text-anchor="middle" >2000</text>
</g>
<rect x="793.4" y="193" width="6" height="41.6" fill="#6f7073" />
<path d="M795.2 196.4 l1.2 -1.4 l1.2 1.4z M795.2 231.4 l1.2 1.4 l1.2 -1.4z" stroke="none" fill="#d0d0d0" stroke-width="1" />
<rect x="794.8" y="212" width="3.2" height="12" fill="#8e8f92" />
<circle cx="796.4" cy="195.8" r="1.6" fill="none" stroke="#ccc" stroke-width="0.4"/>
<rect x="670.1" y="238" width="129.9" height="6.2" fill="#48484a" />
<rect x="670.1" y="238" width="6.4" height="6.2" fill="#5c5c5e" />
<rect x="671.6" y="238.8" width="0.9" height="0.9" fill="#a0a0a2" />
<rect x="671.6" y="240.5" width="0.9" height="0.9" fill="#a0a0a2" />
<rect x="671.6" y="242.20000000000002" width="0.9" height="0.9" fill="#a0a0a2" />
<rect x="673.4" y="238.8" width="0.9" height="0.9" fill="#a0a0a2" />
<rect x="673.4" y="240.5" width="0.9" height="0.9" fill="#a0a0a2" />
<rect x="673.4" y="242.20000000000002" width="0.9" height="0.9" fill="#a0a0a2" />
<rect x="677" y="238.3" width="43" height="5.9" fill="#6f7073" />
<circle cx="680.2" cy="240.4" r="1.2" fill="#e8e8e8" />
<circle cx="680.4" cy="243" r="0.9" fill="#1a1a1a" />
<circle cx="684.4" cy="240.2" r="0.8" fill="#e8e8e8" />
<circle cx="684.4" cy="242.8" r="1.2" fill="#1a1a1a" />
<text x="688.8" y="243.4" font-size="4.1" fill="#e2e2e2" text-anchor="start"  textLength="33.5" lengthAdjust="spacingAndGlyphs">サブツール[選択範囲]</text>
<rect x="670.6" y="247" width="61.4" height="9.6" fill="url(#gsel)" stroke="#55727f" stroke-width="0.5"/>
<rect x="732" y="247" width="62" height="9.6" fill="#7a7b7f" stroke="#636468" stroke-width="0.5"/>
<rect x="674" y="249.4" width="5.6" height="4.8" fill="#7fa0b4" stroke="#a8c4d4" stroke-width="0.5"/>
<text x="681.9" y="254" font-size="4.9" fill="#f8f8f8" text-anchor="start"  textLength="19.6" lengthAdjust="spacingAndGlyphs">選択範囲</text>
<rect x="670.6" y="257.6" width="123.2" height="166.2" fill="#7a7b7f" stroke="#626367" stroke-width="0.6"/>
<rect x="670.6" y="258" width="61.4" height="14.4" fill="url(#gsel)" />
<rect x="674" y="260.6" width="5.6" height="4.8" fill="#7fa0b4" stroke="#a8c4d4" stroke-width="0.5"/>
<rect x="670.6" y="272.4" width="123.2" height="0.6" fill="#626367" />
<rect x="670.6" y="287" width="123.2" height="0.6" fill="#626367" />
<rect x="670.6" y="301.6" width="123.2" height="0.6" fill="#626367" />
<rect x="670.6" y="317.8" width="61.8" height="0.6" fill="#626367" />
<rect x="732" y="257.6" width="0.6" height="60.4" fill="#626367" />
<text x="706.2" y="271.3" font-size="4.9" fill="#f8f8f8" text-anchor="start"  textLength="25.4" lengthAdjust="spacingAndGlyphs">長方形選択</text>
<text x="772.5" y="271.3" font-size="4.9" fill="#f8f8f8" text-anchor="start"  textLength="19.8" lengthAdjust="spacingAndGlyphs">楕円選択</text>
<text x="704.5999999999999" y="285.6" font-size="4.9" fill="#f8f8f8" text-anchor="start"  textLength="27.2" lengthAdjust="spacingAndGlyphs">投げなわ選択</text>
<text x="768.1999999999999" y="285.6" font-size="4.9" fill="#f8f8f8" text-anchor="start"  textLength="24.1" lengthAdjust="spacingAndGlyphs">折れ線選択</text>
<text x="713.7" y="300.3" font-size="4.9" fill="#f8f8f8" text-anchor="start"  textLength="17.8" lengthAdjust="spacingAndGlyphs">選択ペン</text>
<text x="775.8" y="300.3" font-size="4.9" fill="#f8f8f8" text-anchor="start"  textLength="16.5" lengthAdjust="spacingAndGlyphs">選択消し</text>
<text x="703.6" y="316.2" font-size="4.9" fill="#f8f8f8" text-anchor="start"  textLength="28.4" lengthAdjust="spacingAndGlyphs">シュリンク選択</text>
<ellipse cx="739" cy="262.6" rx="2.8" ry="1.8" fill="none" stroke="#5e5f63" stroke-width="0.6"/>
<ellipse cx="677.4" cy="277.4" rx="2.8" ry="1.8" fill="none" stroke="#4a4b4f" stroke-width="0.6" transform="rotate(-15 677.4 277.4)"/>
<path d="M736.6 279.6 l1 -3.6 l3 0.6 l1.4 2 l-2.4 2.4z" stroke="#5e5f63" fill="none" stroke-width="0.6" />
<ellipse cx="677.4" cy="306.4" rx="2.8" ry="1.8" fill="none" stroke="#4a4b4f" stroke-width="0.6" transform="rotate(-15 677.4 306.4)"/>
<rect x="671.4" y="289.4" width="9.4" height="7.6" fill="#f2f2f2" />
<path d="M672.6 293.2 h3 M674.4 291.6 v3.4 M676.4 294.6 h2.6" stroke="#333" fill="none" stroke-width="0.6" />
<path d="M681.9 292.6 C689.4 289.4 695.4 298.6 704.4 295.4 C710.4 293 714.4 290.4 718.4 290.6" stroke="#0c0c0c" fill="none" stroke-width="4" stroke-linecap="round"/>
<rect x="733" y="289.4" width="9.4" height="7.6" fill="#f2f2f2" />
<path d="M734.2 293.2 h3 M736 291.6 v3.4 M738 294.6 h2.6" stroke="#333" fill="none" stroke-width="0.6" />
<path d="M743.5 292.6 C751 289.4 757 298.6 766 295.4 C772 293 776 290.4 780 290.6" stroke="#0c0c0c" fill="none" stroke-width="4" stroke-linecap="round"/>
<rect x="794.2" y="257.6" width="5.8" height="166.2" fill="#727376" />
<path d="M775.6 430 v-3 l1.8 -1.6 l1.8 1.6 v3z" stroke="#444" fill="#f0f0f0" stroke-width="0.4" />
<rect x="784.2" y="425.6" width="4.4" height="4.6" fill="#f2f2f2" />
<path d="M788.6 430.2 h-1.8 v-1.8z" stroke="none" fill="#555" stroke-width="1" />
<path d="M792.4 426.4 h4.4 l-0.6 4 h-3.2z" stroke="none" fill="#f0f0f0" stroke-width="1" />
<rect x="792" y="425.4" width="5.2" height="0.9" fill="#f0f0f0" />
</svg>
<div id="wheel"></div>
<svg width="800" height="433" viewBox="0 0 800 433"><rect x="-2.2" y="-1.6" width="4.4" height="3.2" fill="#fff" stroke="#e02020" stroke-width="0.8" transform="translate(700.6,64.4) rotate(-18)"/></svg>
</body>
</html>
